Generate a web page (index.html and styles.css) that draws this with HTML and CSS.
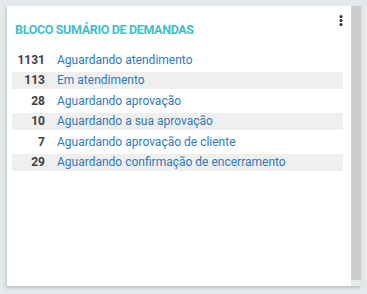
FILE: index.html
```html
<!DOCTYPE html>
<html lang="pt-BR">
    <head>
        <meta charset="UTF-8" />
        <title>Bloco sumário de demandas</title>
        <link rel="stylesheet" href="styles.css">
    </head>
    <body>
        <div class="widget">
            <div class="widget-body">
                <div class="widget-header">
                    <h2 class="widget-title">BLOCO SUMÁRIO DE DEMANDAS</h2>
                    <button class="widget-menu" aria-label="Opções">
                        <svg width="4" height="11" viewBox="0 0 4 11">
                            <circle cx="2" cy="1.6" r="1.5" />
                            <circle cx="2" cy="5.5" r="1.5" />
                            <circle cx="2" cy="9.4" r="1.5" />
                        </svg>
                    </button>
                </div>

                <ul class="summary-list">
                    <li class="summary-row"><span class="summary-count">1131</span><a class="summary-label" href="#">Aguardando atendimento</a></li>
                    <li class="summary-row"><span class="summary-count">113</span><a class="summary-label" href="#">Em atendimento</a></li>
                    <li class="summary-row"><span class="summary-count">28</span><a class="summary-label" href="#">Aguardando aprovação</a></li>
                    <li class="summary-row"><span class="summary-count">10</span><a class="summary-label" href="#">Aguardando a sua aprovação</a></li>
                    <li class="summary-row"><span class="summary-count">7</span><a class="summary-label" href="#">Aguardando aprovação de cliente</a></li>
                    <li class="summary-row"><span class="summary-count">29</span><a class="summary-label" href="#">Aguardando confirmação de encerramento</a></li>
                </ul>
            </div>
            <div class="widget-scroll">
                <div class="scroll-track"></div>
                <div class="scroll-corner"></div>
            </div>
        </div>
    </body>
</html>
```

FILE: styles.css
```css
:root {
    --page-bg: #e4e9ec;
    --title-color: #42bec8;
    --link-color: #3179b9;
    --count-color: #404040;
    --stripe-color: #efefef;
}

body {
    margin: 0;
    padding: 6px 6px 8px 7px;
    background-color: var(--page-bg);
    font-family: Roboto, "Liberation Sans", sans-serif;
}

.widget {
    display: flex;
    width: 354px;
    height: 280px;
    background-color: white;
    box-shadow: -1px 2px 3px rgba(0, 0, 0, 0.18);
}

.widget-body {
    flex: 1;
    padding: 0 8px 0 5px;
}

.widget-header {
    display: flex;
    justify-content: space-between;
    align-items: flex-start;
}

.widget-title {
    margin: 16px 0 0 3px;
    font-size: 12.5px;
    font-weight: bold;
    color: var(--title-color);
    letter-spacing: -0.35px;
}

.widget-menu {
    margin: 9px 0 0 0;
    padding: 0;
    border: none;
    background: none;
    line-height: 0;
}

.widget-menu svg {
    fill: #1f2a3c;
}

.summary-list {
    list-style: none;
    margin: 14px 0 0 0;
    padding: 0;
}

.summary-row {
    display: flex;
    align-items: center;
    height: 17px;
    margin-bottom: 3.5px;
    font-size: 12px;
}

.summary-row:nth-child(even) {
    background-color: var(--stripe-color);
}

.summary-count {
    width: 33px;
    text-align: right;
    font-weight: bold;
    color: var(--count-color);
}

.summary-label {
    margin-left: 12px;
    color: var(--link-color);
    text-decoration: none;
}

.widget-scroll {
    display: flex;
    flex-direction: column;
    width: 10px;
}

.scroll-track {
    flex: 1;
    background-color: #cdcdcd;
}

.scroll-corner {
    height: 6px;
    background-color: #e9e9e9;
}
```
